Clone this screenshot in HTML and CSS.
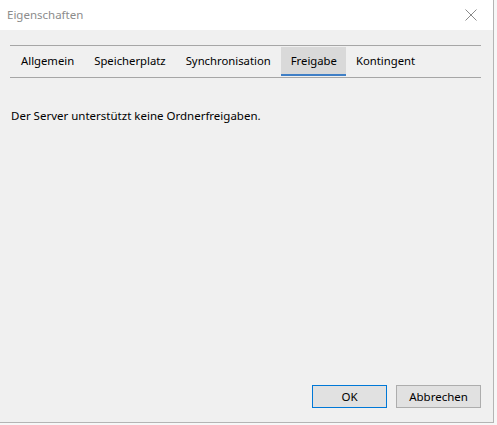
FILE: index.html
```html
<!DOCTYPE html>
<html lang="de">
<head>
<meta charset="utf-8">
<title>Eigenschaften</title>
<link rel="stylesheet" href="styles.css">
</head>
<body>
<div class="window">
  <div class="titlebar">
    <span class="title">Eigenschaften</span>
    <svg class="close" width="12" height="12" viewBox="0 0 12 12"><path d="M0.5 0.5 L11.5 11.5 M11.5 0.5 L0.5 11.5" stroke="#8a8a8a" stroke-width="1" fill="none"/></svg>
  </div>
  <div class="content">
    <div class="tabs">
      <div class="tab">Allgemein</div>
      <div class="tab">Speicherplatz</div>
      <div class="tab">Synchronisation</div>
      <div class="tab active">Freigabe</div>
      <div class="tab">Kontingent</div>
    </div>
    <p class="message">Der Server unterstützt keine Ordnerfreigaben.</p>
    <div class="buttons">
      <button class="btn default">OK</button>
      <button class="btn">Abbrechen</button>
    </div>
  </div>
</div>
</body>
</html>
```
FILE: styles.css
```css
html, body {
  margin: 0;
  padding: 0;
  background: #f7f7f7;
}
body {
  width: 497px;
  height: 425px;
  font-family: "Noto Sans", "DejaVu Sans", sans-serif;
  font-size: 11.5px;
  color: #000;
}
.window {
  width: 493px;
  height: 422px;
  background: #f0f0f0;
  border-right: 1px solid #b4b4b4;
  border-bottom: 1px solid #b4b4b4;
  display: flex;
  flex-direction: column;
}
.titlebar {
  height: 30px;
  background: #fff;
  display: flex;
  align-items: center;
  justify-content: space-between;
  padding: 0 16px 0 7px;
  flex: none;
}
.title {
  color: #8c8c8c;
  font-size: 11.5px;
  position: relative;
  top: -1px;
}
.close {
  display: block;
}
.content {
  flex: 1;
  display: flex;
  flex-direction: column;
  padding: 15px 12px 14px 10px;
}
.tabs {
  display: flex;
  border-top: 1px solid #a6a6a6;
  border-bottom: 1px solid #a6a6a6;
  padding: 1px 0 1px 1px;
  height: 29px;
  box-sizing: content-box;
  font-size: 11.3px;
}
.tab {
  padding: 0 10px;
  display: flex;
  align-items: center;
  height: 29px;
  box-sizing: border-box;
  line-height: 1;
  border-bottom: 2px solid transparent;
}
.tab.active {
  background: #d9d9d9;
  border-bottom-color: #3f7fc6;
  padding: 0 9px 0 10px;
}
.message {
  margin: 30px 0 0 1px;
  line-height: 16px;
}
.buttons {
  margin-top: auto;
  display: flex;
  justify-content: flex-end;
  gap: 9px;
}
.btn {
  font: inherit;
  width: 75px;
  height: 23px;
  background: #e1e1e1;
  border: 1px solid #adadad;
  padding: 0;
  color: #000;
}
.btn + .btn {
  width: 85px;
}
.btn.default {
  border-color: #0078d7;
}
```
